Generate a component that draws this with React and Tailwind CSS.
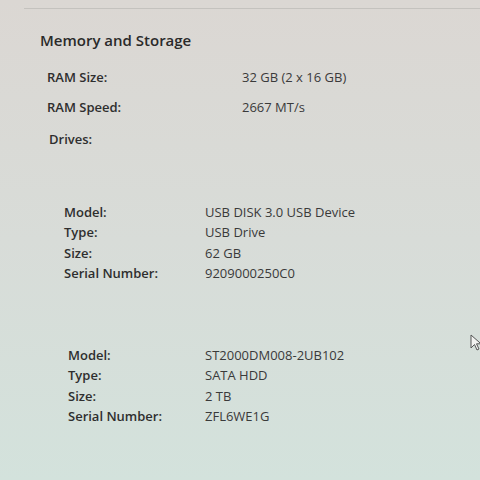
const ram = [
  { label: 'RAM Size:', value: '32 GB (2 x 16 GB)' },
  { label: 'RAM Speed:', value: '2667 MT/s' },
];

const drives = [
  {
    model: 'USB DISK 3.0 USB Device',
    type: 'USB Drive',
    size: '62 GB',
    serial: '9209000250C0',
  },
  {
    model: 'ST2000DM008-2UB102',
    type: 'SATA HDD',
    size: '2 TB',
    serial: 'ZFL6WE1G',
  },
];

function DriveRows({ drive, labelWidth }) {
  const rows = [
    ['Model:', drive.model],
    ['Type:', drive.type],
    ['Size:', drive.size],
    ['Serial Number:', drive.serial],
  ];
  return (
    <div className="flex flex-col">
      {rows.map(([label, value]) => (
        <div key={label} className="flex h-[20.5px] items-center">
          <span className={`${labelWidth} shrink-0 font-semibold text-[#2e2e2e]`}>{label}</span>
          <span className="text-[#3a3a3a]">{value}</span>
        </div>
      ))}
    </div>
  );
}

export default function App() {
  return (
    <div
      className="relative h-[480px] w-[480px] overflow-hidden bg-gradient-to-b from-[#dbd7d3] via-[#d8dcd8] to-[#d3e2dc] text-[13px] leading-none"
      style={{ fontFamily: '"Open Sans", "Noto Sans", sans-serif' }}
    >
      <div className="ml-[24px] mt-[8px] h-px bg-[#c4c2be]" />

      <div className="pl-[40px] pt-[19px]">
        <h1 className="h-[24px] text-[15px] leading-[24px] font-semibold text-[#2a2a2a]">
          Memory and Storage
        </h1>

        <div className="mt-[15px] flex flex-col gap-[10px] pl-[7px]">
          {ram.map((r) => (
            <div key={r.label} className="flex h-[20px] items-center">
              <span className="w-[195px] shrink-0 font-semibold text-[#2e2e2e]">{r.label}</span>
              <span className="text-[#3a3a3a]">{r.value}</span>
            </div>
          ))}
          <div className="mt-[2px] flex h-[20px] items-center pl-[2px]">
            <span className="font-semibold text-[#2e2e2e]">Drives:</span>
          </div>
        </div>
      </div>

      <div className="mt-[53px] pl-[64px]">
        <DriveRows drive={drives[0]} labelWidth="w-[141px]" />
      </div>

      <div className="mt-[61px] pl-[68px]">
        <DriveRows drive={drives[1]} labelWidth="w-[137px]" />
      </div>

      <svg
        className="absolute left-[470px] top-[334px]"
        width="12"
        height="18"
        viewBox="0 0 12 18"
      >
        <path
          d="M1 1 L1 14 L4.5 10.5 L7 16 L9 15 L6.5 9.8 L11 9.8 Z"
          fill="#f2f2f0"
          stroke="#555"
          strokeWidth="1"
          strokeLinejoin="round"
        />
      </svg>
    </div>
  );
}
